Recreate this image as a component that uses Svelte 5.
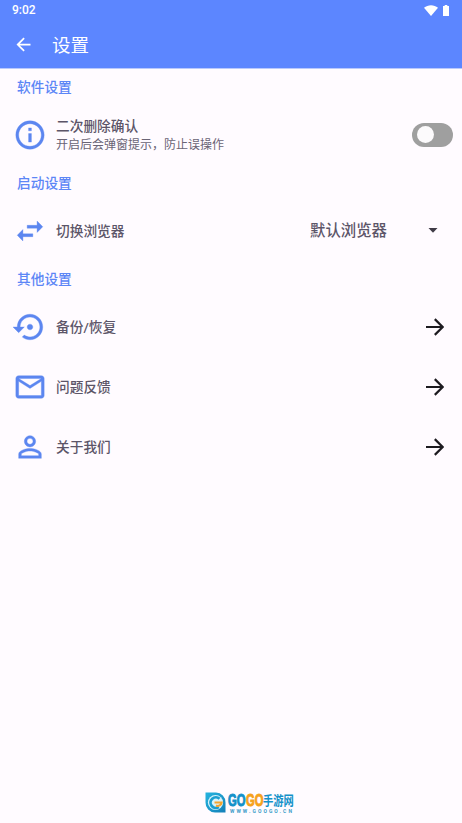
<script>
  const links = [
    { icon: 'restore', label: '备份/恢复' },
    { icon: 'mail', label: '问题反馈' },
    { icon: 'person', label: '关于我们' }
  ];
  const paths = {
    info: 'M11 7h2v2h-2zm0 4h2v6h-2zm1-9C6.48 2 2 6.48 2 12s4.48 10 10 10 10-4.48 10-10S17.52 2 12 2zm0 18c-4.41 0-8-3.59-8-8s3.59-8 8-8 8 3.59 8 8-3.59 8-8 8z',
    swap: 'M6.99 11L3 15l3.99 4v-3H14v-2H6.99v-3zM21 9l-3.99-4v3H10v2h7.01v3L21 9z',
    restore: 'M14 12c0-1.1-.9-2-2-2s-2 .9-2 2 .9 2 2 2 2-.9 2-2zm-2-9c-4.97 0-9 4.03-9 9H0l4 4 4-4H5c0-3.87 3.13-7 7-7s7 3.13 7 7-3.13 7-7 7c-1.51 0-2.91-.49-4.06-1.3l-1.42 1.44C8.04 20.3 9.94 21 12 21c4.97 0 9-4.03 9-9s-4.03-9-9-9z',
    mail: 'M22 6c0-1.1-.9-2-2-2H4c-1.1 0-2 .9-2 2v12c0 1.1.9 2 2 2h16c1.1 0 2-.9 2-2V6zm-2 0l-8 5-8-5h16zm0 12H4V8l8 5 8-5v10z',
    person: 'M12 5.9c1.16 0 2.1.94 2.1 2.1s-.94 2.1-2.1 2.1S9.9 9.16 9.9 8s.94-2.1 2.1-2.1m0 9c2.97 0 6.1 1.46 6.1 2.1v1.1H5.9V17c0-.64 3.13-2.1 6.1-2.1M12 4C9.79 4 8 5.79 8 8s1.79 4 4 4 4-1.79 4-4-1.79-4-4-4zm0 9c-2.67 0-8 1.34-8 4v3h16v-3c0-2.66-5.33-4-8-4z'
  };
  let confirmDelete = $state(false);
</script>

{#snippet icon(name)}
  <svg class="icon" viewBox="0 0 24 24"><path d={paths[name]} /></svg>
{/snippet}

<div class="screen">
  <header>
    <div class="status">
      <span class="time">9:02</span>
      <svg class="wifi" viewBox="0 0 14 11"><path d="M0 2.7C4-.7 10-.7 14 2.7L7 11z" /></svg>
      <svg class="battery" viewBox="0 0 6 11"><path d="M1.7 0h2.6v1H6v10H0V1h1.7z" /></svg>
    </div>
    <div class="bar">
      <svg class="back" viewBox="0 0 24 24"><path d="M20 11H7.83l5.59-5.59L12 4l-8 8 8 8 1.41-1.41L7.83 13H20v-2z" /></svg>
      <h1>设置</h1>
    </div>
  </header>

  <main>
    <h2>软件设置</h2>
    <div class="row">
      {@render icon('info')}
      <div class="text double">
        <span class="label">二次删除确认</span>
        <span class="hint">开启后会弹窗提示，防止误操作</span>
      </div>
      <button class="switch" class:on={confirmDelete} aria-label="二次删除确认" onclick={() => (confirmDelete = !confirmDelete)}>
        <span class="thumb"></span>
      </button>
    </div>

    <h2>启动设置</h2>
    <div class="row">
      {@render icon('swap')}
      <div class="text"><span class="label">切换浏览器</span></div>
      <div class="spinner">
        <span>默认浏览器</span>
        <svg viewBox="0 0 10 5"><path d="M0.5 0h9L5 4.7z" /></svg>
      </div>
    </div>

    <h2>其他设置</h2>
    {#each links as link}
      <div class="row">
        {@render icon(link.icon)}
        <div class="text"><span class="label">{link.label}</span></div>
        <svg class="go" viewBox="0 0 18 18"><path d="M0 9h16.5M8.8 1.1l7.9 7.9-7.9 7.9" /></svg>
      </div>
    {/each}
  </main>

  <footer>
    <svg class="logo" viewBox="0 0 21 21">
      <defs>
        <linearGradient id="leaf" x2="1" y2="1"><stop stop-color="#25b4df" /><stop offset="1" stop-color="#147fb8" /></linearGradient>
      </defs>
      <path d="M0.5 0.5H11a9.8 9.8 0 0 1 9.5 10V20.5H10a9.7 9.7 0 0 1-9.5-10z" fill="url(#leaf)" />
      <circle cx="10.5" cy="10.5" r="7.6" fill="#d8f3fb" />
      <path d="M14.5 6.8A5.3 5.3 0 1 0 13.8 15" fill="none" stroke="#1b9ed0" stroke-width="2.8" />
      <path d="M9.5 10.5h7.2a4 4 0 0 1-5.7 3" fill="none" stroke="#f5a42e" stroke-width="2" />
    </svg>
    <div class="brand">
      <div class="name"><span class="go1">GO</span><span class="go2">GO</span><span class="cn">手游网</span></div>
      <div class="url">WWW.GOOGO.CN</div>
    </div>
  </footer>
</div>

<style>
  :global(body) { margin: 0; }
  .screen {
    width: 462px;
    height: 823px;
    display: flex;
    flex-direction: column;
    background: #fffbff;
    color: #5c5568;
    font-family: Roboto, "Noto Sans CJK SC", sans-serif;
    overflow: hidden;
  }
  header { height: 68px; background: #5c86ff; color: #fff; border-bottom: 1px solid #b9c9fd; }
  header svg { fill: #fff; }
  .status { height: 20px; display: flex; align-items: center; padding: 0 13px 0 12px; }
  .time { flex: 1; font-size: 12px; font-weight: 500; }
  .wifi { width: 14px; height: 11px; margin-right: 5px; }
  .battery { width: 6px; height: 11px; }
  .bar { height: 48px; display: flex; align-items: center; padding-left: 13px; }
  .back { width: 21px; height: 21px; margin-right: 18px; }
  h1 { margin: 3px 0 0; font-size: 18.5px; line-height: 24px; font-weight: 400; }
  main { flex: 1; }
  h2 {
    height: 36px;
    margin: 0;
    padding-left: 17px;
    font-size: 13.7px;
    line-height: 36px;
    font-weight: 500;
    color: #5c86f6;
  }
  h2:first-child { height: 35.5px; }
  .row { height: 60px; display: flex; align-items: center; padding: 0 18px 0 13px; }
  .icon { width: 34px; height: 34px; flex: none; margin-right: 9px; fill: #5c86f0; stroke: #5c86f0; stroke-width: 0.25; }
  .text { flex: 1; display: flex; flex-direction: column; }
  .double { padding-top: 1px; }
  .label { font-size: 13.7px; line-height: 18px; font-weight: 500; }
  .hint { font-size: 12px; line-height: 18px; padding-top: 1px; color: #6a6475; }
  .switch {
    width: 41px;
    height: 24px;
    margin-right: -9px;
    padding: 3px 5px;
    border: 0;
    border-radius: 12px;
    background: #9f9f9f;
    display: flex;
    align-items: center;
  }
  .switch.on { justify-content: flex-end; background: #5c86ff; }
  .thumb { width: 17px; height: 17px; border-radius: 50%; background: #fcfafc; }
  .spinner { display: flex; align-items: center; font-size: 15.4px; line-height: 22px; font-weight: 500; margin-right: 6px; }
  .spinner svg { width: 10px; height: 5px; margin-left: 41px; fill: #3f3b46; }
  .go { width: 18px; height: 18px; fill: none; stroke: #1d1b20; stroke-width: 2.2; }
  footer { height: 31px; display: flex; align-items: flex-start; padding-left: 205px; }
  .logo { width: 21px; height: 21px; margin-right: 2px; }
  .brand { width: 67px; }
  .name { display: flex; height: 16px; align-items: center; line-height: 15px; white-space: nowrap; }
  .go1, .go2 { font-family: "Liberation Sans", sans-serif; font-size: 17px; font-weight: 700; width: 17.5px; flex: none; transform: scaleX(0.66); transform-origin: left; -webkit-text-stroke: 1px currentColor; }
  .go1 { color: #1491c9; }
  .go2 { color: #f6a11b; }
  .cn { font-size: 13px; font-weight: 700; color: #1491c9; transform: scaleX(0.79); transform-origin: left; }
  .url { font-size: 5px; line-height: 5px; font-weight: 700; letter-spacing: 2.05px; color: #3b9cc8; padding: 1px 0 0 2px; white-space: nowrap; }
</style>
